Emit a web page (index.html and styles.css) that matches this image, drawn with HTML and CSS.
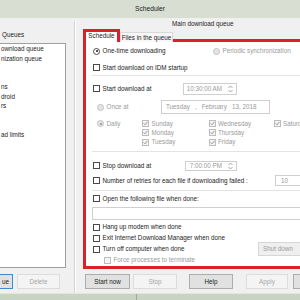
FILE: index.html
```html
<!DOCTYPE html>
<html lang="en">
<head>
    <meta charset="UTF-8">
    <title>Scheduler</title>
    <link rel="stylesheet" href="styles.css">
</head>
<body>

    <!-- Title bar -->
    <div class="titlebar">Scheduler</div>

    <div class="window">

        <!-- Queue list -->
        <div class="queues">
            <div class="queues-label">Queues</div>
            <ul class="queue-list">
                <li>ownload queue</li>
                <li>nization queue</li>
                <li></li>
                <li></li>
                <li>ns</li>
                <li>droid</li>
                <li>rs</li>
                <li></li>
                <li></li>
                <li>ad limits</li>
            </ul>
            <div class="btn-row">
                <button class="btn default btn-queue">ue</button>
                <button class="btn off btn-delete">Delete</button>
            </div>
        </div>

        <div class="splitter"></div>

        <!-- Queue settings -->
        <div class="main">
            <div class="queue-name">Main download queue</div>

            <div class="tabs">
                <div class="tab active">Schedule</div>
                <div class="tab">Files in the queue</div>
            </div>

            <div class="panel">
                <div class="row r1">
                    <div class="opt w-onetime"><span class="rb on"></span><span class="lbl">One-time downloading</span></div>
                    <div class="opt dim"><span class="rb dis"></span><span class="lbl">Periodic synchronization</span></div>
                </div>
                <div class="row r2">
                    <div class="opt"><span class="cb"></span><span class="lbl">Start download on IDM startup</span></div>
                </div>
                <div class="sep"></div>

                <div class="row r3">
                    <div class="opt w-start"><span class="cb"></span><span class="lbl">Start download at</span></div>
                    <div class="field time">10:30:00 AM
                        <svg class="spin" viewBox="0 0 7 8"><path d="M1.5 3 L3.5 1 L5.5 3 M1.5 5 L3.5 7 L5.5 5"/></svg>
                    </div>
                </div>
                <div class="row r4">
                    <div class="opt w-once dim"><span class="rb dis"></span><span class="lbl">Once at</span></div>
                    <div class="field date">
                        <span>Tuesday</span><span>,</span><span>February</span><span>13, 2018</span>
                        <svg class="chev" viewBox="0 0 7 5"><path d="M1 1 L3.5 3.6 L6 1"/></svg>
                    </div>
                </div>
                <div class="daily">
                    <div class="opt w-daily dim"><span class="rb dis on"></span><span class="lbl">Daily</span></div>
                    <div class="days dim">
                        <div class="day"><span class="cb dis"><svg viewBox="0 0 5 5"><path d="M0.6 2.4 L2 3.8 L4.4 0.9"/></svg></span><span class="lbl">Sunday</span></div>
                        <div class="day"><span class="cb dis"><svg viewBox="0 0 5 5"><path d="M0.6 2.4 L2 3.8 L4.4 0.9"/></svg></span><span class="lbl">Wednesday</span></div>
                        <div class="day"><span class="cb dis"><svg viewBox="0 0 5 5"><path d="M0.6 2.4 L2 3.8 L4.4 0.9"/></svg></span><span class="lbl">Saturday</span></div>
                        <div class="day"><span class="cb dis"><svg viewBox="0 0 5 5"><path d="M0.6 2.4 L2 3.8 L4.4 0.9"/></svg></span><span class="lbl">Monday</span></div>
                        <div class="day"><span class="cb dis"><svg viewBox="0 0 5 5"><path d="M0.6 2.4 L2 3.8 L4.4 0.9"/></svg></span><span class="lbl">Thursday</span></div>
                        <div class="day"></div>
                        <div class="day"><span class="cb dis"><svg viewBox="0 0 5 5"><path d="M0.6 2.4 L2 3.8 L4.4 0.9"/></svg></span><span class="lbl">Tuesday</span></div>
                        <div class="day"><span class="cb dis"><svg viewBox="0 0 5 5"><path d="M0.6 2.4 L2 3.8 L4.4 0.9"/></svg></span><span class="lbl">Friday</span></div>
                    </div>
                </div>
                <div class="sep"></div>

                <div class="row r6">
                    <div class="opt w-stop"><span class="cb"></span><span class="lbl">Stop download at</span></div>
                    <div class="field time small">7:00:00 PM
                        <svg class="spin" viewBox="0 0 7 8"><path d="M1.5 3 L3.5 1 L5.5 3 M1.5 5 L3.5 7 L5.5 5"/></svg>
                    </div>
                </div>
                <div class="row r7">
                    <div class="opt w-retry"><span class="cb"></span><span class="lbl">Number of retries for each file if downloading failed :</span></div>
                    <div class="field retries">10</div>
                </div>
                <div class="sep"></div>

                <div class="row r8">
                    <div class="opt"><span class="cb"></span><span class="lbl">Open the following file when done:</span></div>
                </div>
                <div class="field path"></div>

                <div class="row r9">
                    <div class="opt"><span class="cb"></span><span class="lbl">Hang up modem when done</span></div>
                </div>
                <div class="row r10">
                    <div class="opt"><span class="cb"></span><span class="lbl">Exit Internet Download Manager when done</span></div>
                </div>
                <div class="row r11">
                    <div class="opt w-turnoff"><span class="cb"></span><span class="lbl">Turn off computer when done</span></div>
                    <div class="field select">Shut down</div>
                </div>
                <div class="row r12">
                    <div class="opt dim"><span class="cb dis"></span><span class="lbl">Force processes to terminate</span></div>
                </div>
            </div>

            <div class="btn-row main-buttons">
                <button class="btn b-start">Start now</button>
                <button class="btn off b-stop">Stop</button>
                <button class="btn b-help">Help</button>
                <button class="btn off b-apply">Apply</button>
                <button class="btn b-close"></button>
            </div>
        </div>
    </div>

    <!-- Strip below the window -->
    <div class="taskbar"><span class="taskbar-line"></span></div>

</body>
</html>
```

FILE: styles.css
```css
/* General Reset */
* {
    margin: 0;
    padding: 0;
    box-sizing: border-box;
}

body {
    width: 300px;
    height: 300px;
    overflow: hidden;
    background: #f0f0f0;
    font-family: "Liberation Sans", Arial, sans-serif;
    font-size: 6.3px;
    line-height: 8px;
    color: #1b1b1b;
}

/* Title bar */
.titlebar {
    height: 18px;
    background: #d8ded2;
    text-align: center;
    font-size: 6.7px;
    line-height: 18px;
    color: #222;
}

.window {
    display: flex;
    height: 275px;
}

/* Left column with the queues */
.queues {
    width: 74px;
    flex: none;
    padding-top: 13px;
}

.queues-label {
    padding-left: 2px;
}

.queue-list {
    list-style: none;
    margin: 4px 0 0 -4px;
    width: 70px;
    height: 225px;
    background: #fff;
    border: 1px solid #a0a0a0;
    overflow: hidden;
    white-space: nowrap;
}

.queue-list li {
    height: 9.5px;
    line-height: 9.5px;
    padding-left: 4px;
}

.splitter {
    width: 2px;
    flex: none;
    margin-top: 3px;
    border-left: 1px solid #d3d3d3;
    border-right: 1px solid #fff;
}

/* Buttons */
.btn-row {
    display: flex;
    margin-top: 6px;
}

.btn {
    flex: none;
    height: 15px;
    border: 1px solid #adadad;
    background: #e1e1e1;
    font: inherit;
    color: #1b1b1b;
    line-height: 13px;
    text-align: center;
}

.btn.default {
    border-color: #3c8ad0;
}

.btn.off {
    background: #f4f4f4;
    border-color: #dcdcdc;
    color: #a6a6a6;
}

.btn-queue { margin-left: -2px; width: 15px; }
.btn-delete { margin-left: 4px; width: 43px; }

.main-buttons { margin-top: 5px; margin-left: 9px; }
.b-start { width: 45px; }
.b-stop { width: 44px; margin-left: 3px; }
.b-help { width: 44px; margin-left: 12px; }
.b-apply { width: 42px; margin-left: 13px; }
.b-close { width: 44px; margin-left: 5px; }

/* Right column */
.main {
    flex: 1;
    min-width: 0;
    overflow: hidden;
}

.queue-name {
    padding: 2px 0 0 96px;
}

/* Tabs */
.tabs {
    display: flex;
    align-items: flex-end;
    margin: 1px 0 -3px 7px;
}

.tab {
    flex: none;
    height: 10px;
    width: 53px;
    padding-top: 1px;
    text-align: center;
    background: #f7f7f7;
    border: 1px solid #d9d9d9;
    border-bottom: 0;
    white-space: nowrap;
}

.tab.active {
    position: relative;
    z-index: 1;
    width: 37px;
    height: 13px;
    padding-top: 0;
    background: #fff;
    border: 3px solid #d9202b;
    border-bottom: 0;
}

/* Schedule panel */
.panel {
    height: 230px;
    margin: 0 -10px 0 7px;
    padding-left: 7px;
    background: #fff;
    border: 3px solid #d9202b;
}

.row {
    display: flex;
    align-items: center;
    white-space: nowrap;
}

.r1 { height: 18px; }
.r2 { height: 15px; }
.r3 { height: 25px; }
.r4 { height: 12px; padding-left: 4px; }
.r6 { height: 19.5px; padding-top: 7.5px; }
.r7 { height: 18px; }
.r8 { height: 16px; }
.r9 { height: 11px; margin-top: 1.5px; }
.r10, .r11, .r12 { height: 11px; }
.r12 { padding-left: 11px; }

.sep {
    height: 1px;
    margin-left: -1px;
    background: #e3e3e3;
}

.opt {
    display: flex;
    align-items: center;
    flex: none;
}

.lbl {
    margin-left: 2.5px;
}

.dim {
    color: #9a9a9a;
}

.w-onetime { width: 120px; }
.w-start { width: 90px; }
.w-once { width: 64px; }
.w-daily { width: 45px; height: 9.33px; }
.w-stop { width: 92px; }
.w-retry { width: 182px; }
.w-turnoff { width: 165px; }

/* Checkboxes and radios */
.cb, .rb {
    display: inline-block;
    flex: none;
    width: 7px;
    height: 7px;
    border: 1px solid #4a4a4a;
    background: #fff;
}

.cb svg {
    display: block;
    width: 5px;
    height: 5px;
    fill: none;
    stroke: #333;
    stroke-width: 0.9;
}

.cb.dis {
    border-color: #bdbdbd;
    background: #f4f4f4;
}

.cb.dis svg {
    stroke: #8a8a8a;
}

.rb {
    border-radius: 50%;
    position: relative;
}

.rb.on::after {
    content: "";
    position: absolute;
    left: 1.5px;
    top: 1.5px;
    width: 2px;
    height: 2px;
    border-radius: 50%;
    background: #1b1b1b;
}

.rb.dis {
    border-color: #c2c2c2;
    background: #e4e4e4;
}

.rb.dis.on::after {
    background: #8f8f8f;
}

/* Daily day grid */
.daily {
    display: flex;
    align-items: flex-start;
    padding: 6px 0 4px 4px;
    height: 38px;
}

.days {
    display: grid;
    grid-template-columns: 66.5px 65px 60px;
    grid-auto-rows: 9.33px;
}

.day {
    display: flex;
    align-items: center;
    white-space: nowrap;
}

/* Input fields */
.field {
    flex: none;
    display: flex;
    align-items: center;
    background: #fff;
    border: 1px solid #cfcfcf;
    color: #9a9a9a;
    white-space: nowrap;
}

.field.time {
    width: 54px;
    height: 12px;
    justify-content: flex-end;
    padding-right: 2px;
}

.field.time.small {
    width: 52px;
    height: 10px;
}

.spin {
    width: 7px;
    height: 8px;
    margin-left: 5px;
    fill: none;
    stroke: #8a8a8a;
    stroke-width: 0.8;
}

.field.date {
    width: 109px;
    height: 14px;
    padding-left: 4px;
}

.field.date span {
    margin-right: 5px;
}

.chev {
    width: 6px;
    height: 5px;
    margin-left: 10px;
    fill: none;
    stroke: #8a8a8a;
    stroke-width: 0.8;
}

.field.retries {
    width: 40px;
    height: 11px;
    padding-left: 5px;
}

.field.path {
    margin: 0.5px 0 0 -1px;
    height: 13px;
}

.field.select {
    width: 50px;
    height: 14px;
    padding-left: 4px;
    background: #efefef;
    border-color: #d6d6d6;
}

/* Strip below the window */
.taskbar {
    height: 7px;
    background: #c9d3c1;
    border-top: 1px solid #e2e7de;
}

.taskbar-line {
    display: block;
    margin-left: 136px;
    width: 1px;
    height: 100%;
    background: #9fa99a;
}
```
